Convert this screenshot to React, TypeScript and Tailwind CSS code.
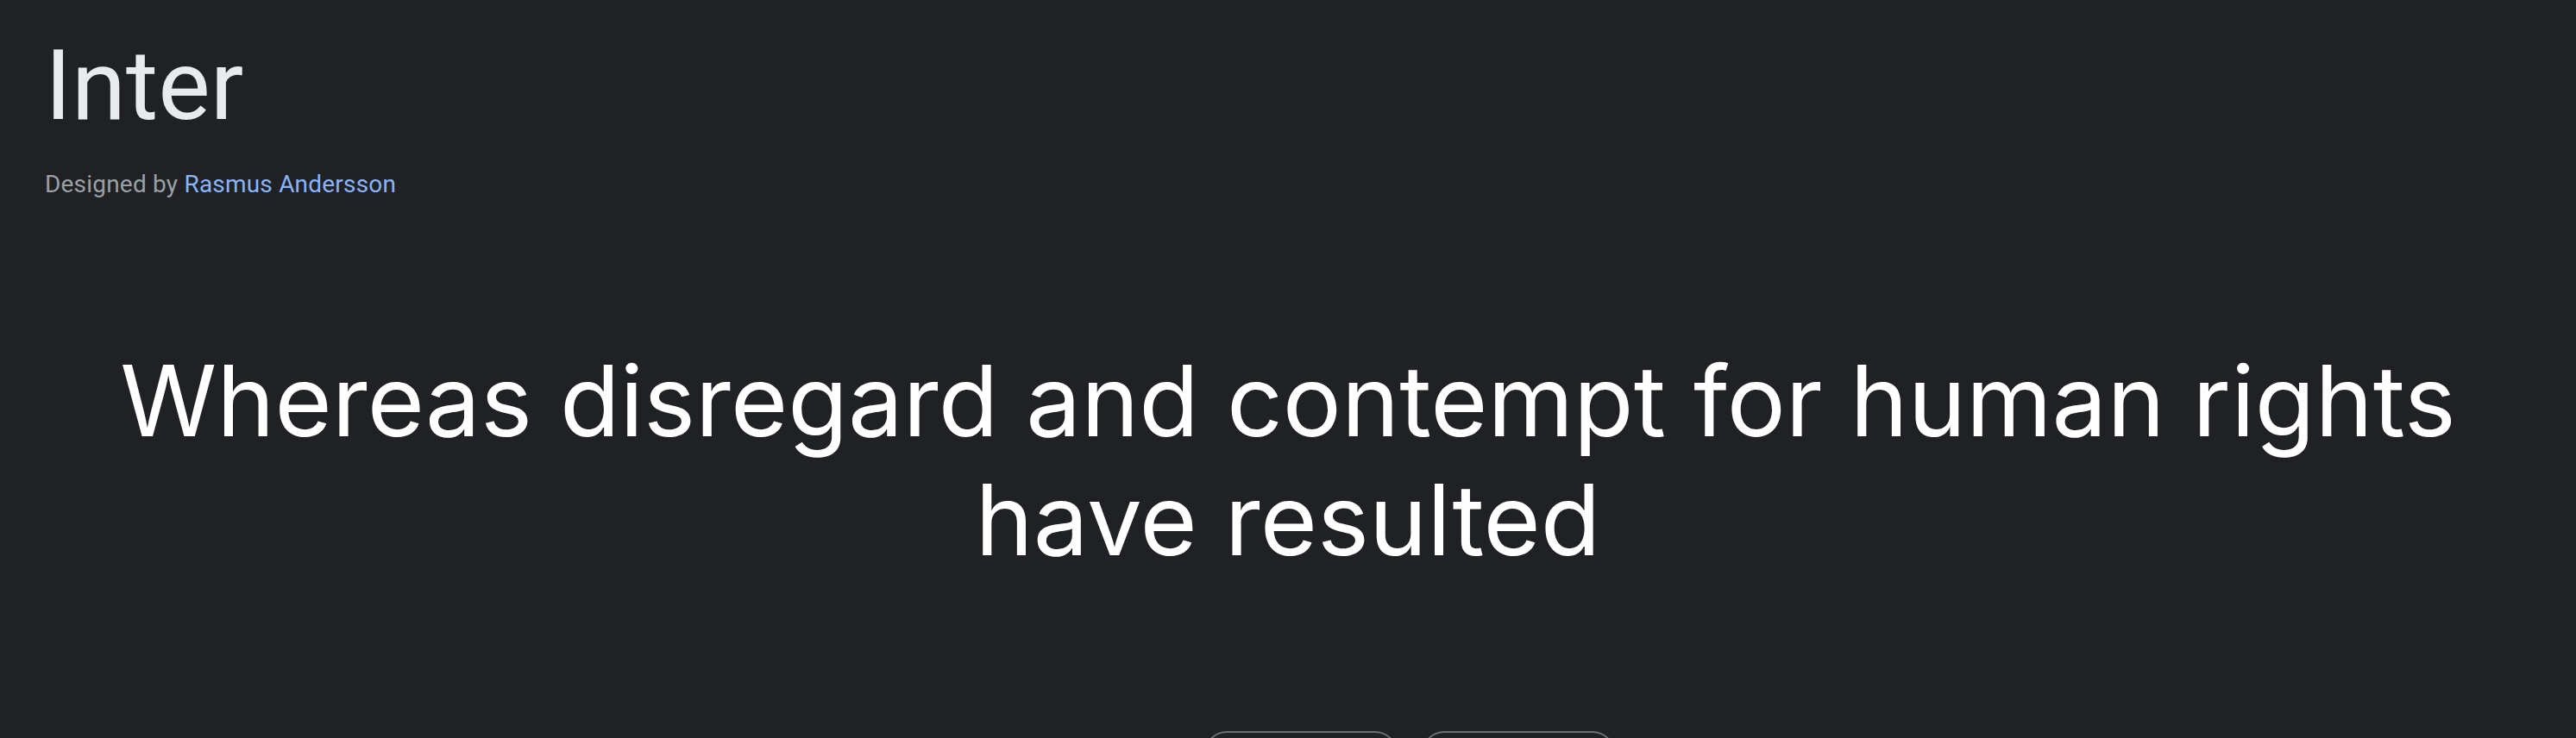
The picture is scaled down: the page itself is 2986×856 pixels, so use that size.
export default function App() {
  return (
    <div className="min-h-screen w-full bg-[#202124] text-[#e8eaed]">
      <header className="px-[52px] pt-[32px]">
        <h1 className="font-['Roboto',sans-serif] text-[114px] font-normal leading-[134px] text-[#e8eaed]">
          Inter
        </h1>
        <p className="mt-[28px] font-['Roboto',sans-serif] text-[28px] leading-[40px] tracking-[0.2px] text-[#9aa0a6]">
          Designed by <a className="text-[#8ab4f8]">Rasmus Andersson</a>
        </p>
      </header>

      <section className="mt-[162px] px-[48px]">
        <p className="text-center font-['Inter',sans-serif] text-[113.7px] font-normal leading-[138px] text-white">
          Whereas disregard and contempt for human rights
          <br />
          have resulted
        </p>
      </section>

      <div className="mt-[176px] flex justify-center gap-[28px] pl-[282px]">
        <button
          type="button"
          aria-label="Get font"
          className="h-[80px] w-[224px] rounded-[26px] border-2 border-[#6b6e72]"
        />
        <button
          type="button"
          aria-label="Get embed code"
          className="h-[80px] w-[224px] rounded-[26px] border-2 border-[#6b6e72]"
        />
      </div>
    </div>
  );
}
